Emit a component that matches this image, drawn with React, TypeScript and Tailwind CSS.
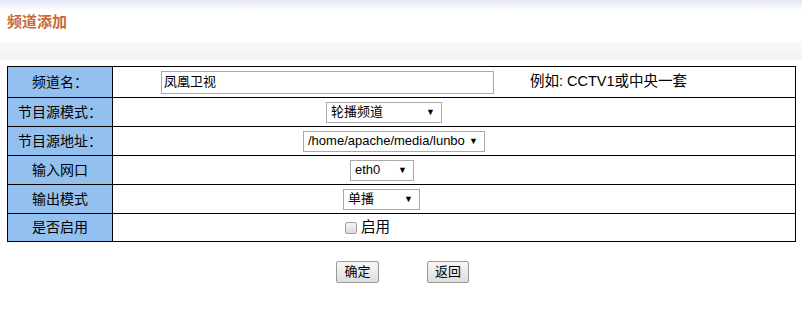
const font = "font-['Liberation_Sans','Noto_Sans_CJK_SC',sans-serif]"

function FakeSelect({ value, width, ml }: { value: string; width: string; ml: string }) {
  return (
    <div
      className={`${ml} ${width} h-[21px] flex items-center justify-between border border-[#a9a9a9] bg-white pl-[4px] pr-[6px] text-[13px] text-black`}
    >
      <span className="whitespace-nowrap">{value}</span>
      <span className="text-[9px] leading-none">▼</span>
    </div>
  )
}

function Row({ label, children, h, last }: { label: string; children: React.ReactNode; h: string; last?: boolean }) {
  return (
    <div className={`flex ${h} ${last ? '' : 'border-b border-black'}`}>
      <div className="w-[105px] shrink-0 bg-[#93c0ee] border-r border-black flex items-center justify-center text-[14px] text-black">
        {label}
      </div>
      <div className="flex-1 flex items-center">{children}</div>
    </div>
  )
}

export default function App() {
  return (
    <div className={`w-[802px] h-[312px] bg-white ${font}`}>
      <div className="h-[42px] bg-gradient-to-b from-[#e2e5f7] via-white via-[25%] to-white flex items-center pl-[7px] pt-[2px]">
        <h1 className="text-[15px] font-bold text-[#c9693a]">频道添加</h1>
      </div>
      <div className="h-[18px] bg-gradient-to-b from-[#fafafa] to-[#f2f2f2]" />

      <div className="mt-[6px] ml-[7px] w-[789px] border border-black">
        <Row label="频道名：" h="h-[31px]">
          <div className="ml-[48px] w-[333px] h-[23px] border border-[#a9a9a9] bg-white flex items-center px-[2px] text-[13px]">
            凤凰卫视
          </div>
          <span className="ml-[36px] text-[14.5px] text-black">例如: CCTV1或中央一套</span>
        </Row>
        <Row label="节目源模式：" h="h-[29px]">
          <FakeSelect value="轮播频道" width="w-[116px]" ml="ml-[213px]" />
        </Row>
        <Row label="节目源地址：" h="h-[29px]">
          <FakeSelect value="/home/apache/media/lunbo" width="w-[182px]" ml="ml-[190px]" />
        </Row>
        <Row label="输入网口" h="h-[29px]">
          <FakeSelect value="eth0" width="w-[64px]" ml="ml-[237px]" />
        </Row>
        <Row label="输出模式" h="h-[29px]">
          <FakeSelect value="单播" width="w-[77px]" ml="ml-[230px]" />
        </Row>
        <Row label="是否启用" h="h-[27px]" last>
          <label className="ml-[232px] flex items-center gap-[4px] text-[14.5px] text-black">
            <span className="w-[12px] h-[12px] rounded-[2px] border border-[#a0a0a0] bg-gradient-to-b from-[#f4f4f4] to-[#dcdcdc]" />
            启用
          </label>
        </Row>
      </div>

      <div className="mt-[19px] flex pl-[336px] gap-[48px]">
        <button
          type="button"
          className="w-[43px] h-[22px] rounded-[2px] border border-[#9a9a9a] bg-gradient-to-b from-[#f7f7f7] to-[#dedede] text-[13px] text-black"
        >
          确定
        </button>
        <button
          type="button"
          className="w-[42px] h-[22px] rounded-[2px] border border-[#9a9a9a] bg-gradient-to-b from-[#f7f7f7] to-[#dedede] text-[13px] text-black"
        >
          返回
        </button>
      </div>
    </div>
  )
}
